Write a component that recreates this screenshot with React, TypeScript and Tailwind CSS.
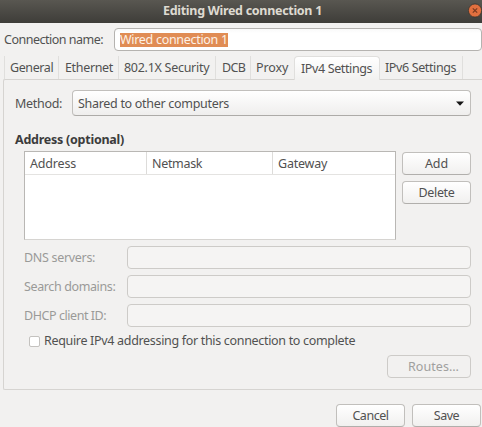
import type { ReactNode } from "react";

const buttonBase =
  "flex items-center justify-center h-[23px] rounded-[4px] border leading-none pt-px";

function Button({ className, children }: { className: string; children: ReactNode }) {
  return (
    <button
      className={`${buttonBase} border-[#c1bfbc] border-b-[#b1afac] bg-linear-to-b from-white to-[#f1f0ef] ${className}`}
    >
      {children}
    </button>
  );
}

const tabs = [
  { label: "General", box: "w-[55px] pl-[5px] border-x", text: "tracking-[-0.41px]" },
  { label: "Ethernet", box: "w-[60px] pl-[6px] border-r", text: "tracking-[-0.34px]" },
  { label: "802.1X Security", box: "w-[97px] pl-[5px] border-r", text: "tracking-[-0.28px]" },
  { label: "DCB", box: "w-[35px] pl-[6px] border-r", text: "tracking-[-0.6px]" },
  { label: "Proxy", box: "w-[43px] pl-[5px]", text: "tracking-[-0.1px]" },
  {
    label: "IPv4 Settings",
    box: "w-[86px] pl-[6px] h-[24px] -mb-px bg-linear-to-b from-white to-[#f2f1f0] border border-b-0 border-[#cbc9c6] rounded-t-[4px]",
    text: "tracking-[-0.38px]",
  },
  { label: "IPv6 Settings", box: "w-[83px] pl-[5px] border-r", text: "tracking-[-0.38px]" },
];

const fields = [
  { label: "DNS servers:", text: "tracking-[-0.31px]" },
  { label: "Search domains:", text: "tracking-[-0.38px]" },
  { label: "DHCP client ID:", text: "tracking-[-0.44px]" },
];

export default function App() {
  return (
    <div className="flex h-[427px] w-[482px] flex-col overflow-hidden whitespace-nowrap bg-[#f2f1f0] font-['Noto_Sans',sans-serif] text-[12.5px] leading-[16px] text-[#515151]">
      <header className="relative flex h-[23px] shrink-0 items-center bg-linear-to-b from-[#595751] to-[#3e3d39] pl-[163px] pb-[2px]">
        <h1 className="font-bold tracking-[-0.3px] text-[#dedad1]">Editing Wired connection 1</h1>
        <button aria-label="Close" className="absolute left-[468px] top-[3px]">
          <svg width="14" height="15" viewBox="0 0 14 15">
            <circle cx="7" cy="7.5" r="6.6" fill="#e2703f" stroke="#38352f" strokeWidth="0.8" />
            <path d="M4.8 5.3 9.2 9.7M9.2 5.3 4.8 9.7" stroke="#7a3a20" strokeWidth="1.2" />
          </svg>
        </button>
      </header>

      <div className="mt-[5px] flex h-[23px] shrink-0 items-center">
        <label className="w-[114px] pl-[4px] tracking-[-0.49px]">Connection name:</label>
        <div className="flex h-[23px] w-[368px] items-center rounded-[4px] border border-[#b5b3b0] bg-linear-to-b from-[#f9f9f9] to-white to-20% pl-[5px]">
          <span className="h-[14px] bg-[#e08c54] leading-[14px] tracking-[-0.3px] text-[#fdf1e6]">
            Wired connection 1
          </span>
        </div>
      </div>

      <nav className="ml-[4px] mt-[5px] flex h-[23px] shrink-0">
        {tabs.map((tab) => (
          <div key={tab.label} className={`relative z-10 flex items-center border-[#e0dfdd] ${tab.box}`}>
            <span className={tab.text}>{tab.label}</span>
          </div>
        ))}
      </nav>

      <main className="ml-[3px] h-[311px] shrink-0 rounded-l-[2px] border border-r-0 border-[#d6d4d1] pl-[11px] pr-[11px] pt-[10px]">
        <div className="flex h-[26px] items-center">
          <label className="w-[57px] pt-px tracking-[-0.3px]">Method:</label>
          <div className="flex h-[26px] w-[399px] items-center justify-between rounded-[4px] border border-[#c1bfbc] border-b-[#adaba8] bg-linear-to-b from-white to-[#efeeed] pl-[5px] pr-[6px]">
            <span className="pt-px tracking-[-0.3px]">Shared to other computers</span>
            <svg width="8" height="5" viewBox="0 0 8 5" className="mt-px">
              <path d="M0 .5h8L4 4.8z" fill="#151515" />
            </svg>
          </div>
        </div>

        <h2 className="mt-[16px] font-bold tracking-[-0.25px] text-[#3c3c3c]">Address (optional)</h2>

        <div className="ml-[9px] mt-[3px] flex">
          <div className="h-[89px] w-[372px] border border-[#b9b7b4] border-b-[#d6d4d1] bg-white">
            <div className="flex h-[23px] items-center border-b border-[#e4e3e1]">
              <div className="h-full w-[122px] border-r border-[#dddcda] pl-[5px] leading-[23px] tracking-[-0.18px]">Address</div>
              <div className="h-full w-[126px] border-r border-[#dddcda] pl-[5px] leading-[23px] tracking-[-0.32px]">Netmask</div>
              <div className="h-full pl-[5px] leading-[23px] tracking-[-0.22px]">Gateway</div>
            </div>
          </div>
          <div className="ml-[6px] mt-px flex flex-col gap-[6px]">
            <Button className="w-[69px] tracking-[-0.1px]">Add</Button>
            <Button className="w-[69px] tracking-[-0.33px]">Delete</Button>
          </div>
        </div>

        <div className="ml-[9px] mt-[6px] flex flex-col gap-[6px]">
          {fields.map((field) => (
            <div key={field.label} className="flex h-[23px] items-center">
              <label className={`w-[103px] pt-px text-[#9a9a98] ${field.text}`}>{field.label}</label>
              <div className="h-[23px] w-[344px] rounded-[4px] border border-[#cdcbc8] bg-[#f5f4f3]" />
            </div>
          ))}
        </div>

        <label className="ml-[14px] mt-[6px] flex h-[16px] items-center">
          <span className="h-[11px] w-[11px] rounded-[2px] border border-[#c4c2bf] bg-white" />
          <span className="ml-[4px] tracking-[-0.32px]">Require IPv4 addressing for this connection to complete</span>
        </label>

        <button
          className={`${buttonBase} ml-[372px] mt-[6px] w-[84px] border-[#cdcbc8] bg-[#f2f1f0] pl-[9px] tracking-[0.06px] text-[#a0a09e]`}
        >
          Routes…
        </button>
      </main>

      <footer className="ml-[336px] mt-[14px] flex shrink-0 gap-[7px]">
        <Button className="w-[69px] tracking-[-0.45px]">Cancel</Button>
        <Button className="w-[69px] tracking-[-0.5px]">Save</Button>
      </footer>
    </div>
  );
}
